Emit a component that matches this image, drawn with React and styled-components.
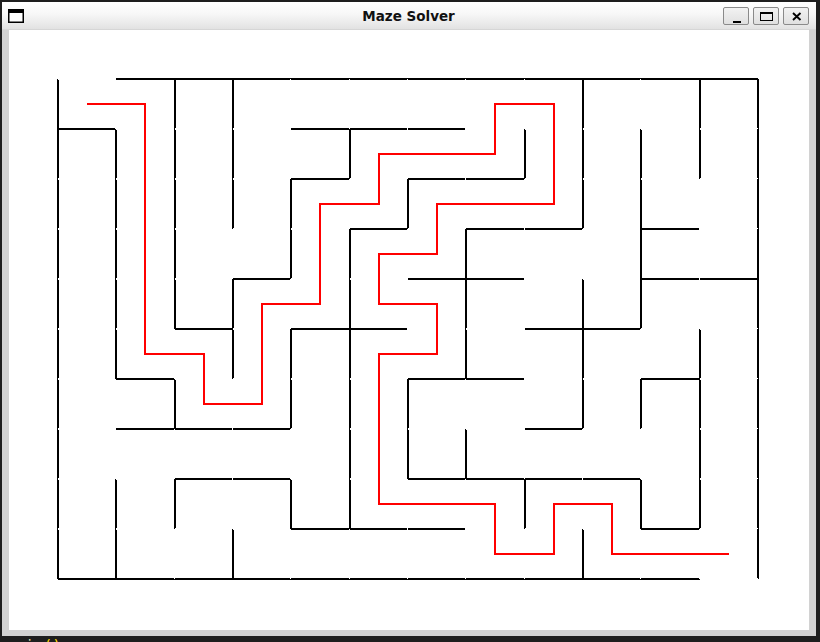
import React from 'react'
import styled, { createGlobalStyle } from 'styled-components'

const GlobalStyle = createGlobalStyle`
  html, body {
    margin: 0;
    padding: 0;
    background: #1e1e1e;
    overflow: hidden;
  }
  body {
    font-family: 'DejaVu Sans', sans-serif;
  }
`

const COLS = 12
const ROWS = 10
const X = Array.from({ length: COLS + 1 }, (_, i) => Math.round(58 + (i * 700) / COLS))
const Y = Array.from({ length: ROWS + 1 }, (_, j) => 79 + j * 50)

// horizontal walls: for each row line, the columns that still have a wall
const H_WALLS = [
  [1, 2, 3, 4, 5, 6, 7, 8, 9, 10, 11],
  [0, 4, 5, 6],
  [4, 6, 7],
  [5, 7, 8, 10],
  [3, 6, 7, 10, 11],
  [2, 4, 5, 8, 9],
  [1, 6, 7, 10],
  [1, 2, 3, 8],
  [2, 3, 6, 7, 8, 9],
  [4, 5, 6, 10],
  [0, 1, 2, 3, 4, 5, 6, 7, 8, 9, 10],
]

// vertical walls: for each column line, the rows that still have a wall
const V_WALLS = [
  [0, 1, 2, 3, 4, 5, 6, 7, 8, 9],
  [1, 2, 3, 4, 5, 8, 9],
  [0, 1, 2, 3, 4, 6, 8],
  [0, 1, 2, 4, 5, 9],
  [2, 3, 5, 6, 8],
  [1, 3, 4, 5, 6, 7, 8],
  [2, 6, 7],
  [3, 4, 5, 7],
  [1, 8],
  [0, 1, 2, 4, 5, 6, 9],
  [1, 2, 3, 4, 6, 8],
  [0, 1, 5, 6, 7, 8],
  [0, 1, 2, 3, 4, 5, 6, 7, 8, 9],
]

const PATH = [
  [0, 0], [1, 0], [1, 5], [2, 5], [2, 6], [3, 6], [3, 4], [4, 4], [4, 2],
  [5, 2], [5, 1], [7, 1], [7, 0], [8, 0], [8, 2], [6, 2], [6, 3], [5, 3],
  [5, 4], [6, 4], [6, 5], [5, 5], [5, 8], [7, 8], [7, 9], [8, 9], [8, 8],
  [9, 8], [9, 9], [11, 9],
]

const buildWalls = () => {
  const lines = []
  for (let c = 0; c < COLS; c++) {
    for (let r = 0; r < ROWS; r++) {
      lines.push({ x1: X[c], y1: Y[r], x2: X[c], y2: Y[r + 1], on: V_WALLS[c].includes(r) })
      lines.push({ x1: X[c], y1: Y[r], x2: X[c + 1], y2: Y[r], on: H_WALLS[r].includes(c) })
      lines.push({ x1: X[c + 1], y1: Y[r], x2: X[c + 1], y2: Y[r + 1], on: V_WALLS[c + 1].includes(r) })
      lines.push({ x1: X[c], y1: Y[r + 1], x2: X[c + 1], y2: Y[r + 1], on: H_WALLS[r + 1].includes(c) })
    }
  }
  return lines
}

const WALLS = buildWalls()

const pathPoints = PATH.map(([c, r]) => {
  const cx = Math.floor((X[c] + X[c + 1]) / 2)
  const cy = Y[r] + 25
  return `${cx},${cy}`
}).join(' ')

const Screen = styled.div`
  width: 820px;
  height: 642px;
  padding: 2px 0 0 2px;
  box-sizing: border-box;
  overflow: hidden;
  background: #1e1e1e;
`

const Window = styled.div`
  width: 814px;
  background: #d2d2d2;
  display: flex;
  flex-direction: column;
`

const TitleBar = styled.div`
  height: 28px;
  box-sizing: border-box;
  display: grid;
  grid-template-columns: 1fr auto 1fr;
  align-items: center;
  padding: 0 7px 0 6px;
  background: linear-gradient(#ffffff 0%, #f7f7f7 45%, #e2e2e2 100%);
  border-bottom: 1px solid #d6d6d6;
`

const Title = styled.div`
  font-family: 'DejaVu Sans', sans-serif;
  font-weight: bold;
  font-size: 13.5px;
  color: #111;
  padding-top: 1px;
`

const Controls = styled.div`
  justify-self: end;
  display: flex;
  gap: 4px;
`

const CtrlButton = styled.div`
  width: 26px;
  height: 18px;
  box-sizing: border-box;
  border: 1px solid #8a8a8a;
  border-radius: 2px;
  background: linear-gradient(#f2f2f2, #e0e0e0);
  display: flex;
  svg {
    display: block;
  }
`

const Body = styled.div`
  padding: 0 7px 6px 7px;
  background: #d2d2d2;
`

const Canvas = styled.svg`
  display: block;
  width: 800px;
  height: 600px;
  background: #ffffff;
`

const EditorLine = styled.div`
  font-family: 'DejaVu Sans Mono', monospace;
  font-size: 15px;
  line-height: 18px;
  padding: 0 0 0 5px;
  margin-top: 1px;
  color: #dcdcaa;
  span {
    color: #ffd700;
  }
`

const AppIcon = () => (
  <svg width="16" height="14" viewBox="0 0 16 14">
    <rect x="0.75" y="0.75" width="14.5" height="12.5" fill="#fff" stroke="#000" strokeWidth="1.5" />
    <rect x="0" y="0" width="16" height="4" fill="#000" />
  </svg>
)

const MinimizeIcon = () => (
  <svg width="24" height="16" viewBox="0 0 24 16">
    <rect x="9" y="13" width="8" height="2" fill="#000" />
  </svg>
)

const MaximizeIcon = () => (
  <svg width="24" height="16" viewBox="0 0 24 16">
    <rect x="6.5" y="4.5" width="12" height="8" fill="none" stroke="#000" strokeWidth="1" />
    <rect x="6" y="4" width="13" height="2" fill="#000" />
  </svg>
)

const CloseIcon = () => (
  <svg width="24" height="16" viewBox="0 0 24 16">
    <path d="M9 5 L16.5 12 M16.5 5 L9 12" stroke="#000" strokeWidth="1.9" fill="none" />
  </svg>
)

const Maze = () => (
  <Canvas viewBox="9 30 800 600" shapeRendering="crispEdges">
    {WALLS.map((w, i) => (
      <line
        key={i}
        x1={w.x1}
        y1={w.y1}
        x2={w.x2}
        y2={w.y2}
        stroke={w.on ? '#000000' : '#ffffff'}
        strokeWidth="2"
      />
    ))}
    <polyline points={pathPoints} fill="none" stroke="#ff0000" strokeWidth="2" />
  </Canvas>
)

const App = () => {
  return (
    <>
      <GlobalStyle />
      <Screen>
        <Window>
          <TitleBar>
            <AppIcon />
            <Title>Maze Solver</Title>
            <Controls>
              <CtrlButton>
                <MinimizeIcon />
              </CtrlButton>
              <CtrlButton>
                <MaximizeIcon />
              </CtrlButton>
              <CtrlButton>
                <CloseIcon />
              </CtrlButton>
            </Controls>
          </TitleBar>
          <Body>
            <Maze />
          </Body>
        </Window>
        <EditorLine>
          main<span>()</span>
        </EditorLine>
      </Screen>
    </>
  )
}

export default App
